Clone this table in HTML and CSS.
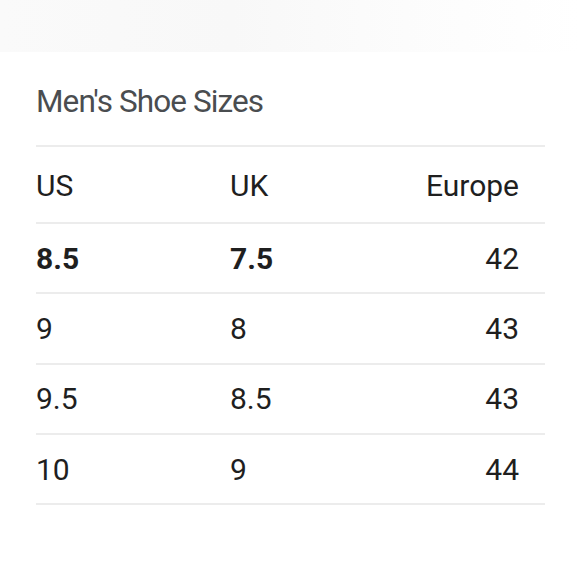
FILE: index.html
```html
<!DOCTYPE html>
<html>
<head>
<meta charset="utf-8">
<link rel="stylesheet" href="styles.css">
</head>
<body>
<div class="haze"></div>
<section class="card">
  <h1 class="title">Men's Shoe Sizes</h1>
  <div class="table">
    <div class="row head">
      <span>US</span><span>UK</span><span class="num">Europe</span>
    </div>
    <div class="row bold">
      <span>8.5</span><span>7.5</span><span class="num normal">42</span>
    </div>
    <div class="row">
      <span>9</span><span>8</span><span class="num">43</span>
    </div>
    <div class="row">
      <span>9.5</span><span>8.5</span><span class="num">43</span>
    </div>
    <div class="row">
      <span>10</span><span>9</span><span class="num">44</span>
    </div>
  </div>
</section>
</body>
</html>
```
FILE: styles.css
```css
html, body {
  margin: 0;
  padding: 0;
  background: #ffffff;
}
body {
  width: 580px;
  height: 580px;
  overflow: hidden;
  font-family: Roboto, "Liberation Sans", sans-serif;
  color: #1f1f1f;
}
.haze {
  height: 52px;
  background: linear-gradient(90deg, #fafafa 0%, #f8f8f8 40%, #fcfcfc 70%, #ffffff 100%);
}
.card {
  padding: 0 35px 0 36px;
}
.title {
  margin: 0;
  padding-top: 30px;
  height: 63px;
  font-size: 31.5px;
  font-weight: 400;
  letter-spacing: -0.9px;
  color: #4a4d50;
  line-height: 40px;
  border-bottom: 2px solid #ececec;
  box-sizing: content-box;
}
.table {
  display: flex;
  flex-direction: column;
}
.row {
  display: grid;
  grid-template-columns: 194px 1fr auto;
  align-items: center;
  height: 68.3px;
  padding-right: 26px;
  border-bottom: 2px solid #ececec;
  font-size: 30px;
}
.row.head {
  height: 77px;
  padding-top: 2px;
  box-sizing: border-box;
}
.bold span {
  font-weight: 700;
}
.bold span.normal {
  font-weight: 400;
}
.num {
  text-align: right;
}
```
